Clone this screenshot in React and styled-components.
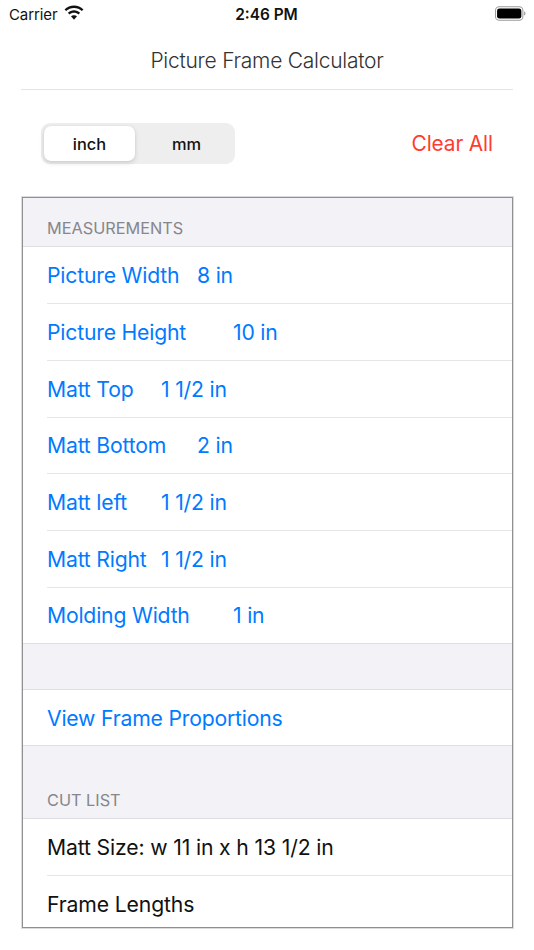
import React from "react";
import styled, { createGlobalStyle } from "styled-components";

const Global = createGlobalStyle`
  html, body { margin: 0; padding: 0; background: #fff; }
  body { font-family: Inter, "Liberation Sans", sans-serif; -webkit-font-smoothing: antialiased; }
`;

const Page = styled.div`
  width: 534px;
  height: 950px;
  overflow: hidden;
  display: flex;
  flex-direction: column;
  background: #fff;
`;

const StatusBar = styled.div`
  height: 28px;
  display: grid;
  grid-template-columns: 1fr auto 1fr;
  align-items: center;
  padding: 0 8px;
  color: #111;
`;
const StatusLeft = styled.div`
  display: flex;
  align-items: center;
  gap: 7px;
  padding-left: 1px;
  font-size: 15px;
  letter-spacing: -0.1px;
`;
const Time = styled.div`
  font-size: 15.4px;
  font-weight: 600;
  margin-right: 1px;
`;
const StatusRight = styled.div`
  display: flex;
  justify-content: flex-end;
`;
const WifiSvg = styled.svg`
  margin-bottom: 3px;
`;
const BatterySvg = styled.svg`
  margin-bottom: 1px;
`;

const Title = styled.div`
  margin: 0 21px;
  height: 62px;
  box-sizing: border-box;
  border-bottom: 1px solid #e4e4e6;
  display: flex;
  align-items: center;
  justify-content: center;
  padding-top: 3px;
  font-size: 21px;
  font-weight: 300;
  letter-spacing: -0.25px;
  color: #333;
`;

const Toolbar = styled.div`
  display: flex;
  align-items: center;
  justify-content: space-between;
  margin-top: 33px;
  padding: 0 41px;
  height: 41px;
`;
const Segmented = styled.div`
  width: 194px;
  height: 41px;
  border-radius: 9px;
  background: #eeeeef;
  display: grid;
  grid-template-columns: 1fr 1fr;
`;
const Segment = styled.div`
  display: flex;
  align-items: center;
  justify-content: center;
  margin: 3px;
  border-radius: 7px;
  font-size: 16.4px;
  font-weight: 500;
  color: #111;
  background: ${(p) => (p.$active ? "#fff" : "transparent")};
  box-shadow: ${(p) => (p.$active ? "0 2px 5px rgba(0,0,0,0.14), 0 0 1px rgba(0,0,0,0.12)" : "none")};
`;
const ClearAll = styled.div`
  font-size: 20.8px;
  color: #ff3b30;
  letter-spacing: -0.1px;
`;

const Table = styled.div`
  margin: 33px 21px 0 22px;
  height: 731px;
  box-sizing: border-box;
  border: 1px solid #909092;
  box-shadow: 0 0 0 1px #dcdcde;
  background: #f2f2f7;
  overflow: hidden;
`;
const SectionHeader = styled.div`
  height: ${(p) => p.$height}px;
  box-sizing: border-box;
  display: flex;
  align-items: flex-end;
  padding: 0 24px 8px;
  font-size: 16.3px;
  color: #86868b;
  border-bottom: 1px solid #dfdfe3;
`;
const Group = styled.div`
  background: #fff;
  border-bottom: ${(p) => (p.$closed ? "1px solid #dfdfe3" : "none")};
`;
const Row = styled.div`
  height: ${(p) => (p.$last ? 55.25 : 56.75)}px;
  box-sizing: border-box;
  margin-left: 24px;
  display: flex;
  align-items: center;
  font-size: 21.2px;
  letter-spacing: ${(p) => (p.$plain ? "-0.15px" : "-0.2px")};
  color: ${(p) => (p.$plain ? "#111" : "#007aff")};
  border-bottom: ${(p) => (p.$last ? "none" : "1px solid #e6e6e9")};
`;
const Label = styled.span`
  width: ${(p) => (p.$width ? `${p.$width}px` : "auto")};
  flex: none;
`;
const Spacer = styled.div`
  height: ${(p) => p.$height}px;
  border-bottom: 1px solid #dfdfe3;
`;

const Wifi = () => (
  <WifiSvg width="20" height="15" viewBox="1 0 17 13">
    <path fill="#111" d="M9.5 2.6c2.6 0 5 1 6.8 2.7l1.4-1.5C15.5 1.7 12.6.4 9.5.4S3.5 1.7 1.3 3.8l1.4 1.5C4.5 3.6 6.9 2.6 9.5 2.6z" />
    <path fill="#111" d="M9.5 6.7c1.5 0 2.9.6 3.9 1.5l1.4-1.5c-1.4-1.3-3.3-2.1-5.3-2.1s-3.9.8-5.3 2.1l1.4 1.5c1-.9 2.4-1.5 3.9-1.5z" />
    <path fill="#111" d="M9.5 8.8c-1 0-1.9.4-2.6 1l2.6 3 2.6-3c-.7-.6-1.6-1-2.6-1z" />
  </WifiSvg>
);

const Battery = () => (
  <BatterySvg width="31" height="15" viewBox="0 0 30 14.5">
    <rect x="0.5" y="0.8" width="26.5" height="12.9" rx="3.6" fill="none" stroke="#9a9a9a" />
    <rect x="2" y="2.3" width="23.5" height="9.9" rx="2.3" fill="#000" />
    <path d="M28.2 5.2v4c.8-.3 1.3-1.1 1.3-2s-.5-1.7-1.3-2z" fill="#9a9a9a" />
  </BatterySvg>
);

const measurements = [
  ["Picture Width", "8 in", 150],
  ["Picture Height", "10 in", 186],
  ["Matt Top", "1 1/2 in", 114],
  ["Matt Bottom", "2 in", 150],
  ["Matt left", "1 1/2 in", 114],
  ["Matt Right", "1 1/2 in", 114],
  ["Molding Width", "1 in", 186],
];

export default function App() {
  return (
    <Page>
      <Global />
      <StatusBar>
        <StatusLeft>
          Carrier <Wifi />
        </StatusLeft>
        <Time>2:46 PM</Time>
        <StatusRight>
          <Battery />
        </StatusRight>
      </StatusBar>
      <Title>Picture Frame Calculator</Title>
      <Toolbar>
        <Segmented>
          <Segment $active>inch</Segment>
          <Segment>mm</Segment>
        </Segmented>
        <ClearAll>Clear All</ClearAll>
      </Toolbar>
      <Table>
        <SectionHeader $height={49.3}>MEASUREMENTS</SectionHeader>
        <Group $closed>
          {measurements.map(([label, value, width], i) => (
            <Row key={label} $last={i === measurements.length - 1}>
              <Label $width={width}>{label}</Label>
              <span>{value}</span>
            </Row>
          ))}
        </Group>
        <Spacer $height={45} />
        <Group $closed>
          <Row $last>View Frame Proportions</Row>
        </Group>
        <SectionHeader $height={73.2}>CUT LIST</SectionHeader>
        <Group>
          <Row $plain>Matt Size: w 11 in x h 13 1/2 in</Row>
          <Row $plain $last>Frame Lengths</Row>
        </Group>
      </Table>
    </Page>
  );
}
